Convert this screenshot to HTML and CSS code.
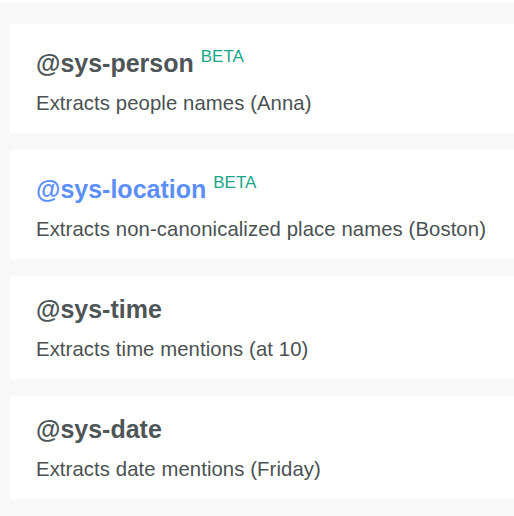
FILE: index.html
```html
<!DOCTYPE html>
<html lang="en">
<head>
<meta charset="utf-8">
<title>System entities</title>
<link rel="stylesheet" href="styles.css">
</head>
<body>
<div class="list">
  <div class="card">
    <h3 class="title">@sys-person <span class="beta">BETA</span></h3>
    <p class="desc">Extracts people names (Anna)</p>
  </div>
  <div class="card">
    <h3 class="title title-active">@sys-location <span class="beta">BETA</span></h3>
    <p class="desc">Extracts non-canonicalized place names (Boston)</p>
  </div>
  <div class="card">
    <h3 class="title">@sys-time</h3>
    <p class="desc">Extracts time mentions (at 10)</p>
  </div>
  <div class="card">
    <h3 class="title">@sys-date</h3>
    <p class="desc">Extracts date mentions (Friday)</p>
  </div>
  <div class="card"></div>
</div>
</body>
</html>
```

FILE: styles.css
```css
html, body {
  margin: 0;
  padding: 0;
  background: #ffffff;
  overflow: hidden;
}

body {
  font-family: "Liberation Sans", Arial, Helvetica, sans-serif;
  color: #4f5656;
}

.list {
  margin-top: 2px;
  background: #f8f8f8;
  padding: 22px 0 0 10px;
  display: flex;
  flex-direction: column;
  gap: 17px;
  height: 600px;
}

.card {
  background: #ffffff;
  padding: 18px 26px;
  flex-shrink: 0;
}

.title {
  margin: 0;
  font-size: 25px;
  line-height: 30px;
  font-weight: 700;
  color: #4e5557;
  white-space: nowrap;
}

.title-active {
  color: #5b8ff7;
}

.beta {
  font-size: 17px;
  font-weight: 400;
  line-height: 30px;
  vertical-align: 10px;
  color: #18a68a;
}

.desc {
  margin: 13px 0 0;
  font-size: 20.3px;
  line-height: 24px;
  letter-spacing: 0.1px;
  color: #4a5152;
  white-space: nowrap;
}
```
